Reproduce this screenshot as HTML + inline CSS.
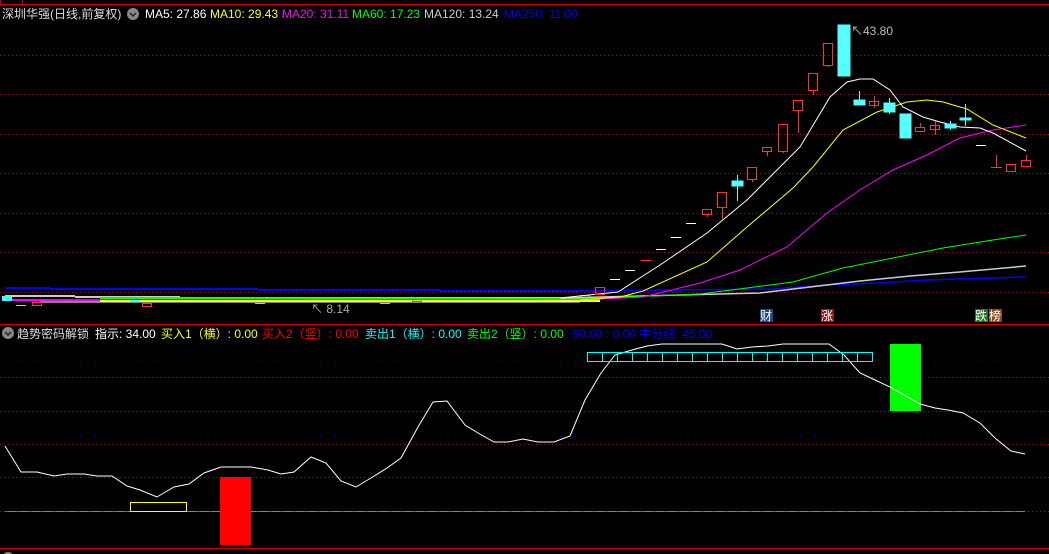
<!DOCTYPE html>
<html><head><meta charset="utf-8"><style>
html,body{margin:0;padding:0;background:#000;width:1049px;height:554px;overflow:hidden}
svg{display:block}
text{font-family:"Liberation Sans","Noto Sans CJK SC",sans-serif;font-size:12px}
</style></head><body>
<svg width="1049" height="554" viewBox="0 0 1049 554" xmlns="http://www.w3.org/2000/svg">
<rect width="1049" height="554" fill="#000"/>
<line x1="0" y1="4.5" x2="1049" y2="4.5" stroke="#c00"/>
<line x1="0.5" y1="0" x2="0.5" y2="4" stroke="#c00"/>
<line x1="22.5" y1="0" x2="22.5" y2="4" stroke="#c00"/>
<g stroke="#b00" stroke-dasharray="1,3">
<line x1="0" y1="55.5" x2="1049" y2="55.5"/>
<line x1="0" y1="94.5" x2="1049" y2="94.5"/>
<line x1="0" y1="134.5" x2="1049" y2="134.5"/>
<line x1="0" y1="173.5" x2="1049" y2="173.5"/>
<line x1="0" y1="213.5" x2="1049" y2="213.5"/>
<line x1="0" y1="252.5" x2="1049" y2="252.5"/>
<line x1="0" y1="292.5" x2="1049" y2="292.5"/>
</g>
<line x1="0" y1="324.5" x2="1049" y2="324.5" stroke="#c00"/>
<line x1="0" y1="548.5" x2="1049" y2="548.5" stroke="#c00"/>
<text x="2" y="18" fill="#ddd">深圳华强(日线,前复权)</text>
<circle cx="133" cy="14" r="6" fill="#888"/><path d="M130 13l3 3 3-3" stroke="#222" fill="none" stroke-width="1.5"/>
<text x="145" y="18" fill="#fff">MA5: 27.86</text>
<text x="210" y="18" fill="#ff0">MA10: 29.43</text>
<text x="282" y="18" fill="#f0f">MA20: 31.11</text>
<text x="352" y="18" fill="#0f0">MA60: 17.23</text>
<text x="424" y="18" fill="#ccc">MA120: 13.24</text>
<text x="504" y="18" fill="#00f">MA250: 11.00</text>
<g stroke-width="2">
<line x1="5" y1="288" x2="50" y2="288" stroke="#00f"/>
<line x1="50" y1="289" x2="258" y2="289" stroke="#00f"/>
<line x1="258" y1="290" x2="440" y2="290" stroke="#00f"/>
<line x1="440" y1="291" x2="580" y2="291" stroke="#00f"/>
<line x1="5" y1="296" x2="75" y2="296" stroke="#ccc"/>
<line x1="75" y1="297" x2="180" y2="297" stroke="#ccc"/>
<line x1="180" y1="298" x2="560" y2="298" stroke="#ccc"/>
<line x1="100" y1="298" x2="600" y2="299" stroke="#0f0"/>
<line x1="10" y1="300" x2="600" y2="301" stroke="#f0f"/>
<line x1="100" y1="301" x2="600" y2="301" stroke="#ff0"/>
<line x1="40" y1="302" x2="580" y2="302" stroke="#fff" stroke-width="1"/>
</g>
<rect x="2" y="296" width="10" height="5" fill="#4ff"/>
<g fill="none" stroke="#f33">
<rect x="32.5" y="302.5" width="9" height="3"/><rect x="142.5" y="303.5" width="9" height="3"/>
<rect x="580.5" y="295.5" width="9" height="4"/>
<rect x="412.5" y="299.5" width="9" height="2"/>
</g>
<g fill="#4ff"><rect x="16" y="305" width="10" height="1"/><rect x="130" y="300" width="10" height="2"/><rect x="255" y="303" width="10" height="1"/><rect x="380" y="303" width="10" height="1"/></g>
<text x="311" y="313" fill="#aaa" font-size="11">↖ 8.14</text>
<g fill="none" stroke-width="1">
<polyline stroke="#00f" stroke-width="1.5" points="580,291 773,289 827,285 877,283 927,280 993,278 1026,277"/>
<polyline stroke="#ccc" stroke-width="1.5" points="560,298 760,293 810,287 860,281 910,276 960,272 1026,266"/>
<polyline stroke="#0f0" points="600,298 700,294 747,288 793,282 843,268 893,258 943,248 993,240 1026,235"/>
<polyline stroke="#f0f" points="600,299 643,297 700,283 740,270 787,247 827,213 860,190 893,170 927,155 960,138 993,130 1026,125"/>
<polyline stroke="#ff0" points="580,300 620,297 643,291 707,262 747,227 793,188 813,167 843,130 877,112 907,102 927,100 943,102 967,109 993,125 1026,138"/>
<polyline stroke="#fff" points="560,298 618,292 660,265 707,233 747,200 800,147 830,97 847,82 860,79 873,79 890,90 903,107 923,117 940,122 960,127 980,128 993,133 1026,151"/>
</g>
<g stroke="#f33" fill="none">
<rect x="595.5" y="287.5" width="9" height="7"/>
<line x1="641" y1="260.5" x2="651" y2="260.5"/>
<rect x="702.5" y="209.5" width="9" height="5"/><line x1="707.5" y1="214" x2="707.5" y2="217"/>
<rect x="717.5" y="192.5" width="9" height="15"/><line x1="722.5" y1="207" x2="722.5" y2="219"/>
<rect x="747.5" y="167.5" width="9" height="12"/><line x1="752.5" y1="179" x2="752.5" y2="182"/>
<rect x="762.5" y="147.5" width="9" height="4"/><line x1="767.5" y1="151" x2="767.5" y2="156"/>
<rect x="778.5" y="124.5" width="9" height="27"/><line x1="783.5" y1="151" x2="783.5" y2="153"/>
<rect x="793.5" y="100.5" width="9" height="10"/><line x1="798.5" y1="110" x2="798.5" y2="133"/>
<rect x="808.5" y="73.5" width="9" height="17"/><line x1="813.5" y1="90" x2="813.5" y2="95"/>
<rect x="823.5" y="43.5" width="9" height="22"/><line x1="828.5" y1="65" x2="828.5" y2="67"/>
<rect x="869.5" y="101.5" width="9" height="4"/><line x1="874.5" y1="96" x2="874.5" y2="108"/>
<rect x="915.5" y="127.5" width="9" height="4"/><line x1="920.5" y1="123" x2="920.5" y2="127"/>
<rect x="930.5" y="125.5" width="9" height="4"/><line x1="935.5" y1="121" x2="935.5" y2="135"/>
<line x1="991" y1="167.5" x2="1002" y2="167.5"/><line x1="996.5" y1="155" x2="996.5" y2="167"/>
<rect x="1006.5" y="164.5" width="9" height="7"/>
<rect x="1021.5" y="160.5" width="9" height="6"/><line x1="1026.5" y1="155" x2="1026.5" y2="160"/>
</g>
<g stroke="#fff"><line x1="610" y1="279.5" x2="620" y2="279.5"/><line x1="625" y1="270.5" x2="635" y2="270.5"/><line x1="656" y1="249.5" x2="666" y2="249.5"/><line x1="671" y1="237.5" x2="681" y2="237.5"/><line x1="686" y1="223.5" x2="696" y2="223.5"/><line x1="976" y1="145.5" x2="986" y2="145.5"/></g>
<g fill="#5ff" stroke="#5ff">
<rect x="732" y="181" width="11" height="5"/><line x1="737.5" y1="175" x2="737.5" y2="201"/>
<rect x="838" y="25" width="12" height="51"/>
<rect x="854" y="100" width="11" height="5"/><line x1="859.5" y1="91" x2="859.5" y2="100"/>
<rect x="884" y="103" width="11" height="9"/><line x1="889.5" y1="98" x2="889.5" y2="114"/>
<rect x="900" y="114" width="11" height="24"/>
<rect x="945" y="124" width="11" height="4"/><line x1="950.5" y1="121" x2="950.5" y2="130"/>
<rect x="960" y="118" width="11" height="2"/><line x1="965.5" y1="104" x2="965.5" y2="126"/>
</g>
<text x="851" y="35" fill="#bbb">↖43.80</text>
<rect x="760" y="309" width="13" height="13" fill="#1a4a8a"/><text x="760" y="320" fill="#fff">财</text>
<rect x="821" y="309" width="13" height="13" fill="#8a1a1a"/><text x="821" y="320" fill="#fff">涨</text>
<rect x="975" y="309" width="13" height="13" fill="#1a7a1a"/><text x="975" y="320" fill="#fff">跌</text>
<rect x="989" y="309" width="13" height="13" fill="#8a4a1a"/><text x="989" y="320" fill="#fff">榜</text>
<circle cx="8" cy="333" r="6" fill="#888"/><path d="M5 332l3 3 3-3" stroke="#222" fill="none" stroke-width="1.5"/>
<text x="17" y="338" fill="#ddd">趋势密码解锁</text>
<text x="95" y="338" fill="#fff">指示: 34.00</text>
<text x="161" y="338" fill="#ff0">买入1（横）: 0.00</text>
<text x="262" y="338" fill="#f00">买入2（竖）: 0.00</text>
<text x="365" y="338" fill="#0ff">卖出1（横）: 0.00</text>
<text x="467" y="338" fill="#0f0">卖出2（竖）: 0.00</text>
<text x="566" y="338" fill="#00f">: 90.00 : 0.00 中分线: 45.00</text>
<g stroke="#00f" stroke-dasharray="1,14"><line x1="5" y1="361.5" x2="1030" y2="361.5"/><line x1="5" y1="436.5" x2="1030" y2="436.5"/></g>
<g stroke="#b00" stroke-dasharray="1,3">
<line x1="0" y1="377.5" x2="1049" y2="377.5"/><line x1="0" y1="411.5" x2="1049" y2="411.5"/>
<line x1="0" y1="444.5" x2="1049" y2="444.5"/><line x1="0" y1="477.5" x2="1049" y2="477.5"/>
<line x1="0" y1="511.5" x2="1049" y2="511.5"/></g>
<line x1="5" y1="511.5" x2="1025" y2="511.5" stroke="#0d0"/>
<line x1="5" y1="511.5" x2="1025" y2="511.5" stroke="#55f" stroke-dasharray="3,9"/>
<rect x="130.5" y="502.5" width="56" height="9" fill="none" stroke="#ff0"/>
<rect x="220" y="477" width="31" height="68" fill="#f00"/>
<rect x="890" y="344" width="31" height="67" fill="#0f0"/>
<polyline fill="none" stroke="#fff" points="5,446 21,472 37,472 54,476 67,474 84,474 97,476 112,476 127,486 140,490 157,497 174,487 189,484 204,473 221,467 251,467 268,470 281,474 294,472 311,457 326,463 341,481 356,487 371,478 387,468 401,458 418,427 433,402 447,401 465,425 478,433 494,442 508,442 523,439 538,442 554,442 570,436 585,400 601,373 615,355 632,350 647,346 662,344 722,344 737,349 752,347 768,346 783,344 829,344 844,355 860,373 875,380 890,387 920,404 935,408 948,410 963,413 980,423 995,438 1011,451 1025,454"/>
<g fill="none" stroke="#0ff">
<rect x="587.5" y="352.5" width="285" height="9"/>
<path d="M602.5 352v9M617.5 352v9M632.5 352v9M647.5 352v9M662.5 352v9M677.5 352v9M692.5 352v9M707.5 352v9M722.5 352v9M737.5 352v9M752.5 352v9M767.5 352v9M782.5 352v9M797.5 352v9M812.5 352v9M827.5 352v9M842.5 352v9M857.5 352v9"/>
</g>
<circle cx="8" cy="558" r="6" fill="#888"/>
<text x="19" y="563" fill="#ddd">RSI(6,12,24)</text>
<text x="92" y="563" fill="#fff">RSI1: 25.44</text>
<text x="162" y="563" fill="#ff0">RSI2: 40.28</text>
<text x="230" y="563" fill="#f0f">RSI3: 50.79</text>
</svg>
</body></html>
